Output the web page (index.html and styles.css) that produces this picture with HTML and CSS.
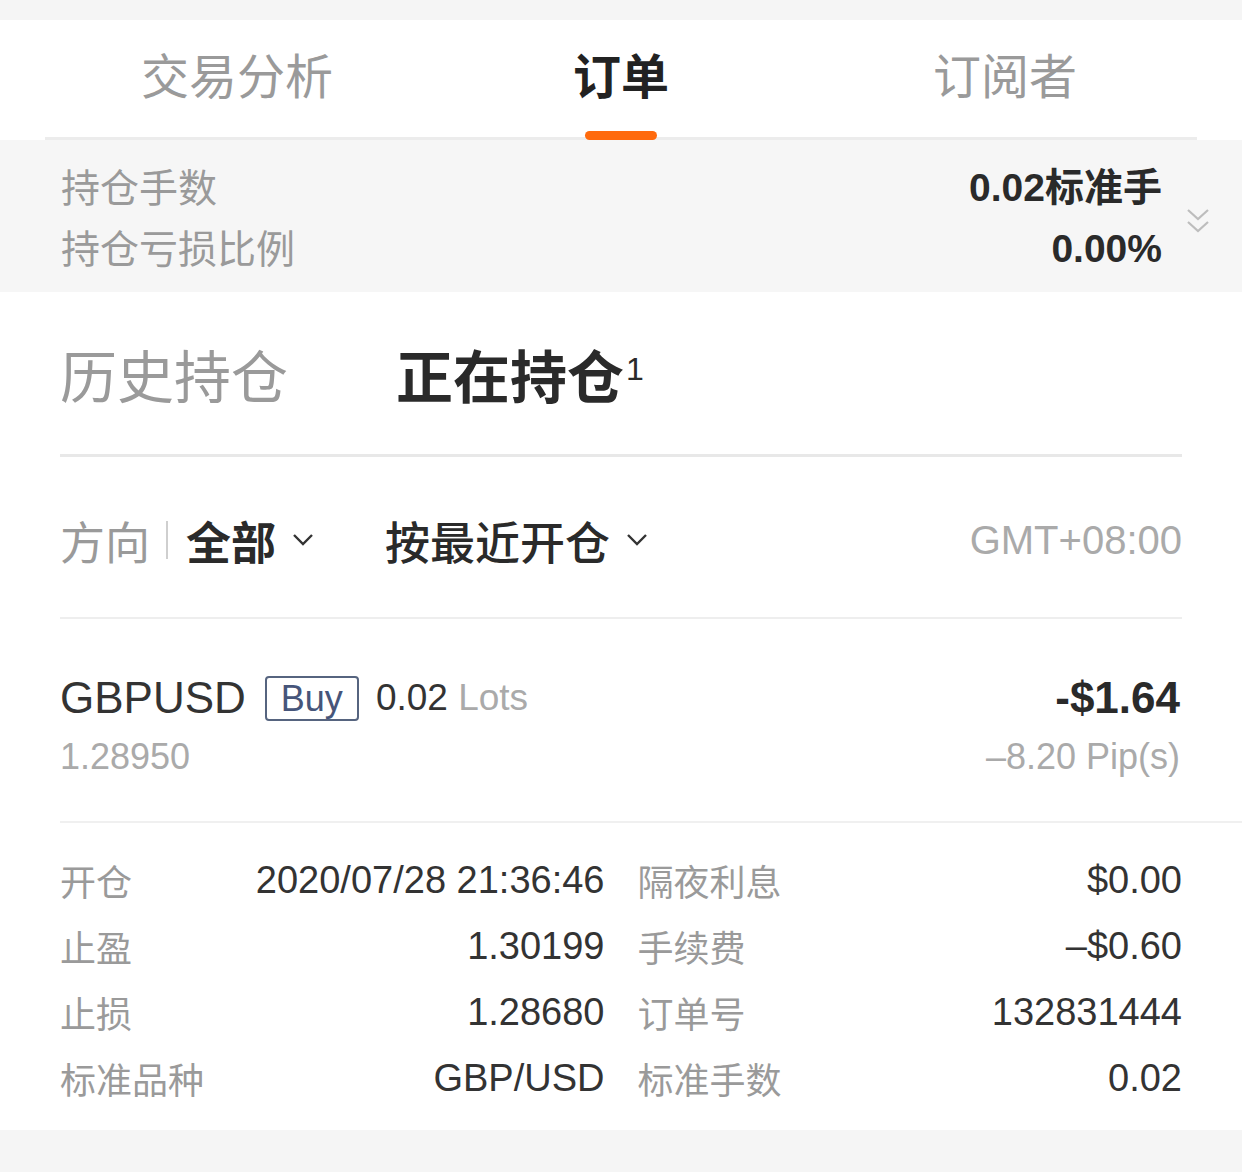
FILE: index.html
```html
<!DOCTYPE html>
<html lang="zh-CN">
<head>
    <meta charset="UTF-8">
    <meta name="viewport" content="width=device-width, initial-scale=1.0">
    <title>订单</title>
    <link rel="stylesheet" href="styles.css">
</head>
<body>
    <div class="top-strip"></div>

    <div class="tabs">
        <div class="tabs-inner">
            <div class="tab">交易分析</div>
            <div class="tab active">订单</div>
            <div class="tab">订阅者</div>
        </div>
    </div>

    <div class="summary">
        <div class="summary-labels">
            <div class="summary-row">持仓手数</div>
            <div class="summary-row">持仓亏损比例</div>
        </div>
        <div class="summary-values">
            <div class="summary-row">0.02标准手</div>
            <div class="summary-row">0.00%</div>
        </div>
        <svg class="expand-icon" width="24" height="28" viewBox="0 0 24 28">
            <polyline points="2,2 12,11 22,2" fill="none" stroke="#bdbdbd" stroke-width="2.2"/>
            <polyline points="2,14 12,23 22,14" fill="none" stroke="#bdbdbd" stroke-width="2.2"/>
        </svg>
    </div>

    <div class="content">
        <div class="subtabs">
            <div class="subtab">历史持仓</div>
            <div class="subtab current">正在持仓<span class="count">1</span></div>
        </div>

        <div class="filters">
            <div class="filter">
                <span class="filter-label">方向</span>
                <span class="filter-sep"></span>
                <span class="filter-value bold">全部</span>
                <svg class="caret" width="22" height="14" viewBox="0 0 22 14">
                    <polyline points="2,2 11,11 20,2" fill="none" stroke="#333" stroke-width="2.4"/>
                </svg>
            </div>
            <div class="filter">
                <span class="filter-value">按最近开仓</span>
                <svg class="caret" width="22" height="14" viewBox="0 0 22 14">
                    <polyline points="2,2 11,11 20,2" fill="none" stroke="#333" stroke-width="2.4"/>
                </svg>
            </div>
            <div class="timezone">GMT+08:00</div>
        </div>

        <div class="order">
            <div class="order-line">
                <div class="order-main">
                    <span class="symbol">GBPUSD</span>
                    <span class="side">Buy</span>
                    <span class="lots">0.02 <em>Lots</em></span>
                </div>
                <div class="profit">-$1.64</div>
            </div>
            <div class="order-line sub">
                <div>1.28950</div>
                <div>–8.20 Pip(s)</div>
            </div>
        </div>

        <div class="details">
            <div class="cell"><span class="k">开仓</span><span class="v">2020/07/28 21:36:46</span></div>
            <div class="cell"><span class="k">隔夜利息</span><span class="v">$0.00</span></div>
            <div class="cell"><span class="k">止盈</span><span class="v">1.30199</span></div>
            <div class="cell"><span class="k">手续费</span><span class="v">–$0.60</span></div>
            <div class="cell"><span class="k">止损</span><span class="v">1.28680</span></div>
            <div class="cell"><span class="k">订单号</span><span class="v">132831444</span></div>
            <div class="cell"><span class="k">标准品种</span><span class="v">GBP/USD</span></div>
            <div class="cell"><span class="k">标准手数</span><span class="v">0.02</span></div>
        </div>
    </div>

    <div class="bottom-strip"></div>
</body>
</html>
```

FILE: styles.css
```css
* {
    margin: 0;
    padding: 0;
    box-sizing: border-box;
}

body {
    width: 1242px;
    background: #fff;
    font-family: 'Liberation Sans', 'Noto Sans CJK SC', sans-serif;
    color: #333;
}

.top-strip {
    height: 20px;
    background: #f5f5f5;
}

.tabs {
    padding: 0 45px;
}

.tabs-inner {
    display: flex;
    height: 120px;
    border-bottom: 3px solid #ececec;
}

.tab {
    flex: 1;
    position: relative;
    text-align: center;
    font-family: 'Noto Sans CJK SC', sans-serif;
    font-size: 48px;
    line-height: 106px;
    color: #9a9a9a;
}

.tab.active {
    color: #222;
    font-weight: 700;
}

.tab.active::after {
    content: '';
    position: absolute;
    left: 50%;
    bottom: -3px;
    width: 72px;
    height: 9px;
    margin-left: -36px;
    border-radius: 5px;
    background: #ff6a0d;
}

.summary {
    display: flex;
    align-items: center;
    height: 152px;
    padding: 0 32px 0 61px;
    background: #f6f6f6;
}

.summary-labels {
    flex: 1;
    color: #9a9a9a;
    font-family: 'Noto Sans CJK SC', sans-serif;
    font-size: 39px;
}

.summary-row {
    line-height: 61px;
}

.summary-values {
    text-align: right;
    font-size: 39px;
    font-weight: 700;
    color: #2a2a2a;
    margin-right: 24px;
    padding-top: 4px;
}

.expand-icon {
    display: block;
    margin-top: 12px;
}

.content {
    padding: 0 60px;
}

.subtabs {
    display: flex;
    align-items: center;
    height: 165px;
    border-bottom: 3px solid #e8e8e8;
}

.subtab {
    font-family: 'Noto Sans CJK SC', sans-serif;
    font-size: 57px;
    color: #9a9a9a;
    margin-right: 108px;
}

.subtab.current {
    color: #2a2a2a;
    font-weight: 700;
}

.count {
    font-family: 'Liberation Sans', sans-serif;
    font-size: 32px;
    font-weight: 400;
    vertical-align: 18px;
    margin-left: 2px;
}

.filters {
    display: flex;
    align-items: center;
    height: 162px;
    padding-top: 6px;
    border-bottom: 2px solid #eee;
}

.filter {
    display: flex;
    align-items: center;
    font-family: 'Noto Sans CJK SC', sans-serif;
    font-size: 45px;
    margin-right: 71px;
}

.filter-label {
    color: #9a9a9a;
}

.filter-sep {
    width: 2px;
    height: 38px;
    background: #cfcfcf;
    margin: 0 18px 0 16px;
}

.filter-value {
    color: #2a2a2a;
    font-weight: 500;
}

.filter-value.bold {
    font-weight: 700;
}

.caret {
    display: block;
    margin-left: 16px;
}

.timezone {
    margin-left: auto;
    font-size: 40px;
    color: #aaa;
}

.order {
    margin-right: -60px;
    padding: 49px 62px 41px 0;
    border-bottom: 2px solid #f0f0f0;
}

.order-line {
    display: flex;
    justify-content: space-between;
    align-items: center;
    height: 60px;
}

.order-line.sub {
    height: 52px;
    padding-top: 5px;
    font-size: 36px;
    color: #aaa;
}

.order-main {
    display: flex;
    align-items: center;
}

.symbol {
    font-size: 44px;
    color: #333;
}

.side {
    margin-left: 19px;
    padding: 0 14px;
    height: 45px;
    line-height: 42px;
    border: 2px solid #56647f;
    border-radius: 4px;
    font-size: 36px;
    color: #46557a;
}

.lots {
    margin-left: 17px;
    font-size: 37px;
    color: #333;
}

.lots em {
    font-style: normal;
    color: #aaa;
}

.profit {
    font-size: 44px;
    font-weight: 700;
    color: #2a2a2a;
}

.details {
    display: grid;
    grid-template-columns: 1fr 1fr;
    column-gap: 33px;
    padding: 24px 0 19px;
}

.cell {
    display: flex;
    justify-content: space-between;
    align-items: center;
    height: 66px;
}

.k {
    font-family: 'Noto Sans CJK SC', sans-serif;
    font-size: 36px;
    color: #9a9a9a;
}

.v {
    font-size: 38px;
    color: #333;
}

.bottom-strip {
    height: 42px;
    background: #f5f5f5;
}
```
